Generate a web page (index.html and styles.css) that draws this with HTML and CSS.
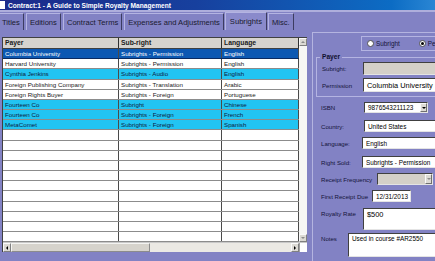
FILE: index.html
```html
<!DOCTYPE html>
<html>
<head>
<meta charset="utf-8">
<link rel="stylesheet" href="styles.css">
</head>
<body>
<div class="window">
  <div class="titlebar"><span class="sysicon"></span><span>Contract:1 - A Guide to Simple Royalty Management</span></div>
  <div class="tabs">
    <div class="tab">Titles</div>
    <div class="tab">Editions</div>
    <div class="tab">Contract Terms</div>
    <div class="tab">Expenses and Adjustments</div>
    <div class="tab active">Subrights</div>
    <div class="tab">Misc.</div>
  </div>
  <div class="body">
    <div class="gridwrap">
      <div class="gridmain">
        <div class="table">
          <div class="row head"><div class="cell c1">Payer</div><div class="cell c2">Sub-right</div><div class="cell c3">Language</div></div>
          <div class="row sel"><div class="cell c1">Columbia University</div><div class="cell c2">Subrights - Permission</div><div class="cell c3">English</div></div>
          <div class="row"><div class="cell c1">Harvard University</div><div class="cell c2">Subrights - Permission</div><div class="cell c3">English</div></div>
          <div class="row cyan"><div class="cell c1">Cynthia Jenkins</div><div class="cell c2">Subrights - Audio</div><div class="cell c3">English</div></div>
          <div class="row"><div class="cell c1">Foreign Publishing Company</div><div class="cell c2">Subrights - Translation</div><div class="cell c3">Arabic</div></div>
          <div class="row"><div class="cell c1">Foreign Rights Buyer</div><div class="cell c2">Subrights - Foreign</div><div class="cell c3">Portuguese</div></div>
          <div class="row cyan"><div class="cell c1">Fourteen Co</div><div class="cell c2">Subright</div><div class="cell c3">Chinese</div></div>
          <div class="row cyan"><div class="cell c1">Fourteen Co</div><div class="cell c2">Subrights - Foreign</div><div class="cell c3">French</div></div>
          <div class="row cyan"><div class="cell c1">MetaComet</div><div class="cell c2">Subrights - Foreign</div><div class="cell c3">Spanish</div></div>
          <div class="row"><div class="cell c1"></div><div class="cell c2"></div><div class="cell c3"></div></div>
          <div class="row"><div class="cell c1"></div><div class="cell c2"></div><div class="cell c3"></div></div>
          <div class="row"><div class="cell c1"></div><div class="cell c2"></div><div class="cell c3"></div></div>
          <div class="row"><div class="cell c1"></div><div class="cell c2"></div><div class="cell c3"></div></div>
          <div class="row"><div class="cell c1"></div><div class="cell c2"></div><div class="cell c3"></div></div>
          <div class="row"><div class="cell c1"></div><div class="cell c2"></div><div class="cell c3"></div></div>
          <div class="row"><div class="cell c1"></div><div class="cell c2"></div><div class="cell c3"></div></div>
          <div class="row"><div class="cell c1"></div><div class="cell c2"></div><div class="cell c3"></div></div>
          <div class="row"><div class="cell c1"></div><div class="cell c2"></div><div class="cell c3"></div></div>
          <div class="row"><div class="cell c1"></div><div class="cell c2"></div><div class="cell c3"></div></div>
          <div class="row"><div class="cell c1"></div><div class="cell c2"></div><div class="cell c3"></div></div>
        </div>
        <div class="vscroll">
          <div class="sbtn"><span class="arr up"></span></div>
          <div class="sbtn"><span class="arr down"></span></div>
        </div>
      </div>
      <div class="hscroll">
        <div class="hbtn"><span class="arr left"></span></div>
        <div class="thumb"></div>
        <div class="track"></div>
        <div class="hbtn"><span class="arr right"></span></div>
        <div class="corner"></div>
      </div>
    </div>
    <div class="panel">
      <div class="radiobox">
        <span class="radio"></span><span class="rlabel">Subright</span>
        <span class="radio on"></span><span class="rlabel">Permission</span>
      </div>
      <div class="group">
        <div class="legend">Payer</div>
        <div class="frow g1"><span class="lab">Subright:</span><span class="field dis"></span></div>
        <div class="frow g2"><span class="lab">Permission</span><span class="field big">Columbia University</span></div>
      </div>
      <div class="frow r-isbn"><span class="lab">ISBN</span><span class="field combo w64">9876543211123<span class="dd"><span class="arr down blk"></span></span></span></div>
      <div class="frow r-country"><span class="lab">Country:</span><span class="field">United States</span></div>
      <div class="frow r-lang"><span class="lab">Language:</span><span class="field">English</span></div>
      <div class="frow r-sold"><span class="lab">Right Sold:</span><span class="field">Subrights - Permission</span></div>
      <div class="frow r-freq"><span class="lab">Receipt Frequency</span><span class="field combo dis w56"><span class="dd"><span class="arr down"></span></span></span></div>
      <div class="frow r-due"><span class="lab">First Receipt Due</span><span class="field w39">12/31/2013</span></div>
      <div class="frow r-rate"><span class="lab">Royalty Rate</span><span class="field multi big">$500</span></div>
      <div class="frow r-notes"><span class="lab">Notes</span><span class="field multi">Used in course #AR2550</span></div>
    </div>
  </div>
</div>
</body>
</html>
```
FILE: styles.css
```css
* { box-sizing: border-box; }
html, body { margin: 0; padding: 0; }
body {
  width: 435px;
  height: 261px;
  overflow: hidden;
  background: #8282c4;
  font-family: "Liberation Sans", Arial, sans-serif;
}
.window {
  width: 435px;
  height: 261px;
  display: flex;
  flex-direction: column;
  overflow: hidden;
}
.titlebar {
  flex: none;
  height: 12px;
  border-bottom: 2px solid #aeaedc;
  background: linear-gradient(to right, #1c2a8a, #17409e 45%, #0c6cc4 90%, #2a86d4);
  display: flex;
  align-items: center;
  color: #fff;
  font-weight: bold;
  font-size: 6.6px;
  white-space: nowrap;
}
.sysicon {
  width: 5px;
  height: 8px;
  background: #fff;
  margin-right: 3px;
}
.tabs {
  flex: none;
  height: 18px;
  display: flex;
  align-items: flex-end;
}
.tab {
  height: 17px;
  margin-left: 2px;
  padding: 0 3px;
  border-top: 1px solid #b4b4e2;
  border-left: 1px solid #b4b4e2;
  border-right: 1px solid #3c3c60;
  display: flex;
  align-items: center;
  font-size: 7.6px;
  color: #1a1a30;
  white-space: nowrap;
}
.tab:first-child { margin-left: -2px; }
.tab.active {
  height: 18px;
  margin-left: 1px;
  margin-right: -1px;
  padding: 0 4px 1px;
  background: #8a8acb;
}
.body {
  flex: 1;
  display: flex;
  min-height: 0;
}
.gridwrap {
  flex: none;
  margin: 7px 0 0 2px;
  width: 305px;
  height: 215px;
  display: flex;
  flex-direction: column;
  border-top: 1px solid #404040;
  border-left: 1px solid #404040;
  background: #fff;
}
.gridmain {
  display: flex;
  flex: 1;
  min-height: 0;
}
.table {
  width: 296px;
  display: flex;
  flex-direction: column;
  overflow: hidden;
}
.row {
  flex: none;
  display: flex;
  height: 10.18px;
  border-bottom: 1px solid #8c8c8c;
  color: #1a1a1a;
}
.cell {
  border-right: 1px solid #4a4a4a;
  padding-left: 2px;
  font-size: 6.2px;
  line-height: 9px;
  white-space: nowrap;
  overflow: hidden;
}
.c1 { width: 116px; }
.c2 { width: 103px; }
.c3 { width: 77px; }
.row.head {
  height: 11px;
  background: #d6d3ce;
  border-bottom: 1px solid #404040;
  color: #202020;
}
.row.head .cell {
  font-weight: bold;
  font-size: 6.8px;
  line-height: 10px;
  border-right-color: #303030;
}
.row.sel {
  background: #0c58b2;
  color: #fff;
  border-bottom-color: #0a2a60;
}
.row.cyan {
  background: #22c4f2;
  color: #0c1c44;
}
.vscroll {
  width: 8px;
  background: #f6f6f4;
  display: flex;
  flex-direction: column;
  justify-content: space-between;
}
.sbtn {
  height: 8px;
  background: #dcdad4;
  border: 1px solid;
  border-color: #fafafa #808080 #808080 #fafafa;
  display: flex;
  align-items: center;
  justify-content: center;
}
.arr { width: 0; height: 0; display: block; }
.arr.up { border-left: 2px solid transparent; border-right: 2px solid transparent; border-bottom: 2px solid #8a8a8a; }
.arr.down { border-left: 2px solid transparent; border-right: 2px solid transparent; border-top: 2px solid #8a8a8a; }
.arr.down.blk { border-top-color: #000; }
.arr.left { border-top: 2px solid transparent; border-bottom: 2px solid transparent; border-right: 2px solid #000; }
.arr.right { border-top: 2px solid transparent; border-bottom: 2px solid transparent; border-left: 2px solid #000; }
.hscroll {
  flex: none;
  height: 9.6px;
  display: flex;
  border-top: 1px solid #c8c8c8;
}
.hbtn {
  width: 8px;
  background: #dcdad4;
  border: 1px solid;
  border-color: #fafafa #808080 #808080 #fafafa;
  display: flex;
  align-items: center;
  justify-content: center;
}
.thumb {
  width: 139px;
  background: #d6d3cc;
  border: 1px solid;
  border-color: #f4f4f2 #8c8c8c #8c8c8c #f4f4f2;
}
.track {
  flex: 1;
  background: #ebe9e4;
}
.corner {
  width: 8px;
  background: #fff;
  border-left: 1px solid #a0a0a0;
}
.panel {
  flex: 1;
  min-width: 0;
  margin: 2px 0 0 5px;
  border-top: 1px solid #b4b4e0;
  border-left: 1px solid #b4b4e0;
  overflow: hidden;
  display: flex;
  flex-direction: column;
  color: #14143a;
}
.radiobox {
  flex: none;
  margin: 3px 0 0 48px;
  width: 110px;
  height: 15px;
  border: 1px solid #b4b4e2;
  display: flex;
  align-items: center;
  font-size: 6.4px;
  white-space: nowrap;
}
.radio {
  flex: none;
  width: 7px;
  height: 7px;
  border-radius: 50%;
  background: #fff;
  border: 1px solid #505050;
  margin-left: 5px;
  display: flex;
  align-items: center;
  justify-content: center;
}
.radio.on { margin-left: 19px; }
.radio.on::after {
  content: "";
  width: 3px;
  height: 3px;
  border-radius: 50%;
  background: #000;
}
.rlabel { margin-left: 2px; }
.group {
  flex: none;
  margin: 6px 0 0 3px;
  width: 140px;
  height: 40px;
  border: 1px solid #b4b4e2;
  display: flex;
  flex-direction: column;
  padding-left: 5px;
}
.legend {
  align-self: flex-start;
  margin: -5px 0 0 -2px;
  height: 8px;
  padding: 0 2px;
  background: #8282c4;
  font-weight: bold;
  font-size: 6.6px;
  line-height: 8px;
  color: #101030;
}
.frow {
  flex: none;
  display: flex;
  align-items: center;
  padding-left: 8px;
  white-space: nowrap;
}
.group .frow { padding-left: 0; }
.lab {
  flex: none;
  font-size: 6.1px;
}
.field {
  flex: none;
  width: 90px;
  height: 100%;
  background: #fff;
  border: 1px solid;
  border-color: #404040 #e4e4e4 #e4e4e4 #404040;
  font-size: 6.4px;
  padding-left: 3px;
  display: flex;
  align-items: center;
  color: #000;
  overflow: hidden;
}
.field.dis { background: #d4d0c8; }
.field.big { font-size: 7.4px; }
.field.multi { align-items: flex-start; padding-top: 1px; }
.combo { padding-right: 0; }
.dd {
  margin-left: auto;
  width: 7px;
  height: 100%;
  background: #dcdad4;
  border: 1px solid;
  border-color: #fafafa #707070 #707070 #fafafa;
  display: flex;
  align-items: center;
  justify-content: center;
}
.w64 { width: 64px; }
.w56 { width: 56px; }
.w39 { width: 39px; }
.g1 { margin-top: 1px; height: 13px; }
.g1 .lab, .g2 .lab { width: 41px; }
.g2 { margin-top: 3px; height: 14px; }
.r-isbn { margin-top: 5px; height: 11px; }
.r-isbn .lab { width: 43px; }
.r-country { margin-top: 7px; height: 12px; }
.r-country .lab { width: 43px; }
.r-lang { margin-top: 5px; height: 12px; }
.r-lang .lab { width: 41px; }
.r-sold { margin-top: 7px; height: 12px; }
.r-sold .lab { width: 41px; }
.r-freq { margin-top: 5px; height: 12px; }
.r-freq .lab { width: 56px; }
.r-due { margin-top: 5px; height: 12px; }
.r-due .lab { width: 51px; }
.r-rate { margin-top: 6px; height: 22px; align-items: flex-start; }
.r-rate .lab { width: 42px; padding-top: 2px; }
.r-notes { margin-top: 3px; height: 24px; align-items: flex-start; }
.r-notes .lab { width: 27px; padding-top: 2px; }
```
